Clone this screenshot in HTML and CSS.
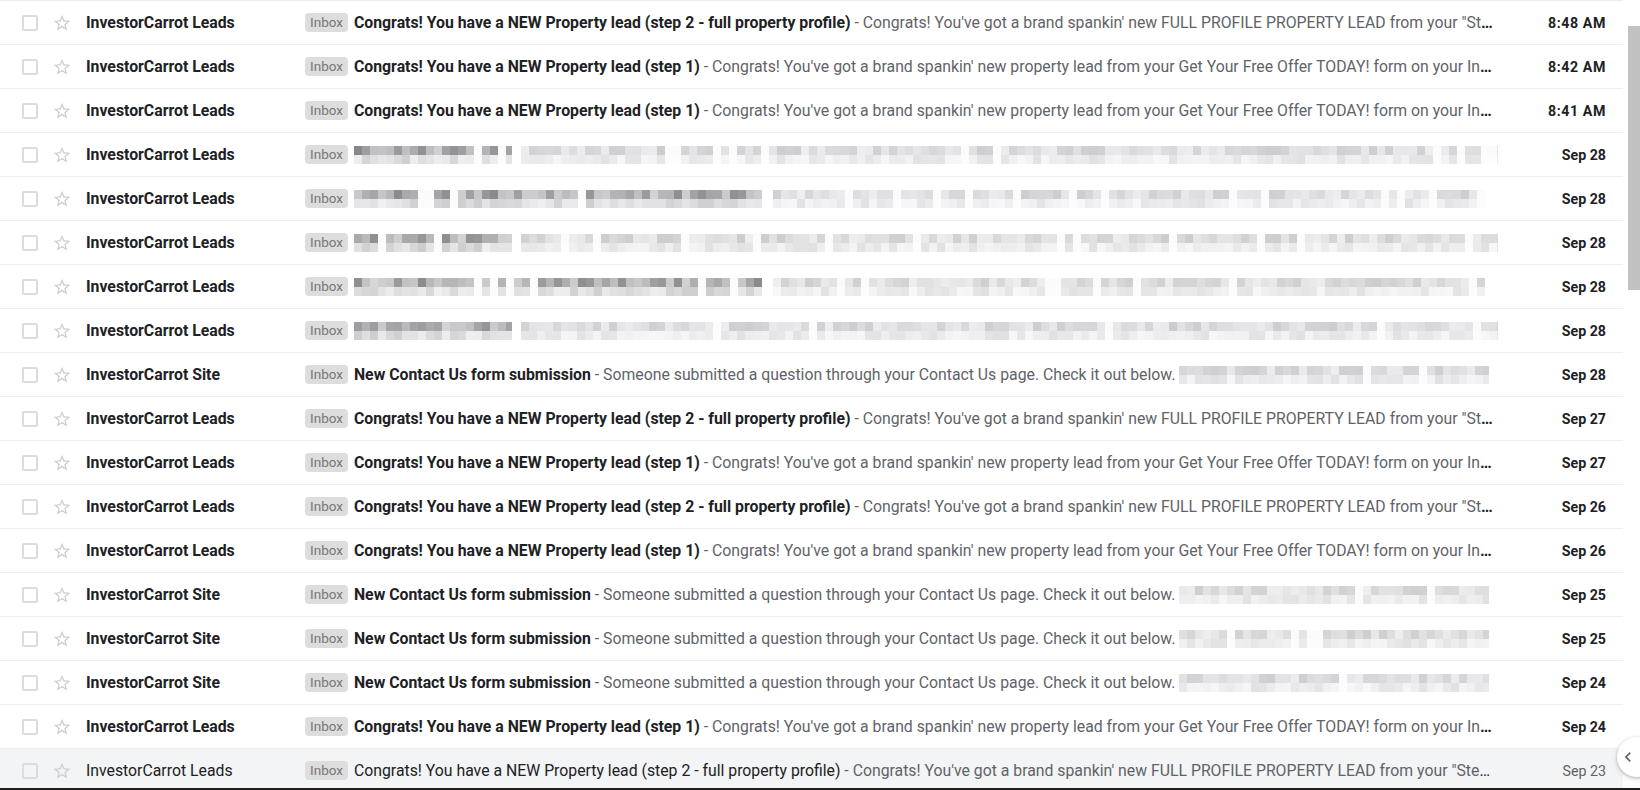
FILE: index.html
```html
<!DOCTYPE html>
<html lang="en">
<head>
    <meta charset="UTF-8">
    <title>Inbox</title>
    <link rel="stylesheet" href="styles.css">
</head>
<body>
    <div class="mail-list" id="mail-list"></div>
    <div class="scroll-track"><div class="scroll-thumb"></div></div>
    <button class="side-toggle" title="Show side panel">
        <svg width="20" height="20" viewBox="0 0 24 24"><path d="M15.41 7.41L14 6l-6 6 6 6 1.41-1.41L10.83 12z" fill="#5f6368"/></svg>
    </button>

    <script>
        const STEP2 = {
            subject: 'Congrats! You have a NEW Property lead (step 2 - full property profile)',
            snippet: 'Congrats! You\'ve got a brand spankin\' new FULL PROFILE PROPERTY LEAD from your "Step 2 - Full Property Profile" form on your InvestorCarrot website'
        };
        const STEP1 = {
            subject: 'Congrats! You have a NEW Property lead (step 1)',
            snippet: 'Congrats! You\'ve got a brand spankin\' new property lead from your Get Your Free Offer TODAY! form on your InvestorCarrot website'
        };
        const CONTACT = {
            subject: 'New Contact Us form submission',
            snippet: 'Someone submitted a question through your Contact Us page. Check it out below.',
            blur: 310
        };
        // hidden (pixelated) messages: widths of the subject / snippet blur
        const SHORT = { blurSubject: 158, blurSnippet: 980 };
        const LONG = { blurSubject: 410, blurSnippet: 712 };

        const LEADS = 'InvestorCarrot Leads';
        const SITE = 'InvestorCarrot Site';

        const rows = [
            [LEADS, STEP2, '8:48 AM'],
            [LEADS, STEP1, '8:42 AM'],
            [LEADS, STEP1, '8:41 AM'],
            [LEADS, SHORT, 'Sep 28'],
            [LEADS, LONG, 'Sep 28'],
            [LEADS, SHORT, 'Sep 28'],
            [LEADS, LONG, 'Sep 28'],
            [LEADS, SHORT, 'Sep 28'],
            [SITE, CONTACT, 'Sep 28'],
            [LEADS, STEP2, 'Sep 27'],
            [LEADS, STEP1, 'Sep 27'],
            [LEADS, STEP2, 'Sep 26'],
            [LEADS, STEP1, 'Sep 26'],
            [SITE, CONTACT, 'Sep 25'],
            [SITE, CONTACT, 'Sep 25'],
            [SITE, CONTACT, 'Sep 24'],
            [LEADS, STEP1, 'Sep 24'],
            [LEADS, STEP2, 'Sep 23', true]
        ];

        let seed = 7;
        function rnd() {
            seed = (seed * 16807) % 2147483647;
            return seed / 2147483647;
        }

        function grey(min, max) {
            const v = Math.round(min + rnd() * (max - min));
            return `rgb(${v},${v},${v + 2})`;
        }

        // builds a pixelated block standing in for blurred text
        function mosaic(width, dark) {
            const cols = Math.round(width / 8);
            let html = `<span class="mosaic" style="width:${width}px">`;
            for (let i = 0; i < cols; i++) {
                if (i > 2 && rnd() < 0.08) {
                    html += '<span class="px-col"><i style="background:#fbfbfb"></i><i style="background:#fcfcfc"></i></span>';
                    continue;
                }
                const top = dark ? grey(135, 215) : grey(205, 238);
                const bottom = dark ? grey(205, 240) : grey(225, 247);
                html += `<span class="px-col"><i style="background:${top}"></i><i style="background:${bottom}"></i></span>`;
            }
            return html + '</span>';
        }

        const star = '<svg width="20" height="20" viewBox="0 0 24 24"><path d="M22 9.24l-7.19-.62L12 2 9.19 8.63 2 9.24l5.46 4.73L5.82 21 12 17.27 18.18 21l-1.63-7.03L22 9.24zM12 15.4l-3.76 2.27 1-4.28-3.32-2.88 4.38-.38L12 6.1l1.71 4.04 4.38.38-3.32 2.88 1 4.28L12 15.4z" fill="#cfcfcf"/></svg>';

        const list = document.getElementById('mail-list');
        list.innerHTML = rows.map(([from, mail, date, read]) => {
            let body;
            if (mail.blurSubject) {
                body = mosaic(mail.blurSubject, true) + mosaic(mail.blurSnippet, false);
            } else {
                body = `<span class="subject">${mail.subject}</span>` +
                       `<span class="snippet"> - ${mail.snippet}${mail.blur ? ' ' + mosaic(mail.blur, false) : ''}</span>`;
            }
            const blurred = (mail.blurSubject || mail.blur) ? ' blurred' : '';
            const timeClass = date.includes('M') ? ' time' : '';
            return `
                <div class="mail-row${read ? ' read' : ''}">
                    <span class="check"></span>
                    <span class="star">${star}</span>
                    <span class="sender">${from}</span>
                    <div class="content${blurred}"><span class="label">Inbox</span>${body}</div>
                    <span class="date${timeClass}">${date}</span>
                </div>`;
        }).join('');
    </script>
</body>
</html>
```

FILE: styles.css
```css
* {
    box-sizing: border-box;
}
html, body {
    margin: 0;
}
body {
    font-family: Roboto, "Liberation Sans", sans-serif;
    color: #202124;
    background: #fff;
    display: flex;
    height: 790px;
    overflow: hidden;
    border-bottom: 2px solid #1f1f1f;
}
.mail-list {
    width: 1623px;
    flex: 0 0 1623px;
    border-top: 1px solid #ececec;
}
.mail-row {
    display: flex;
    align-items: center;
    height: 44px;
    padding-left: 22px;
    border-bottom: 1px solid #efefef;
    font-size: 15.8px;
    font-weight: 700;
}
.mail-row.read {
    background: #f3f4f5;
    font-weight: 400;
}
.check {
    width: 16px;
    height: 16px;
    border: 2px solid #dcdcdc;
    border-radius: 2px;
    flex: 0 0 16px;
}
.star {
    display: flex;
    margin-left: 14px;
    width: 20px;
}
.sender {
    margin-left: 14px;
    width: 219px;
    flex: 0 0 219px;
    white-space: nowrap;
    overflow: hidden;
}
.content {
    flex: 1;
    min-width: 0;
    padding-top: 1px;
    white-space: nowrap;
    overflow: hidden;
    text-overflow: ellipsis;
    line-height: 22px;
}
.content.blurred {
    text-overflow: clip;
}
.label {
    display: inline-block;
    vertical-align: 1px;
    background: #dddddd;
    color: #777;
    font-size: 13.5px;
    font-weight: 400;
    border-radius: 4px;
    padding: 2px 5px;
    margin-right: 6px;
    line-height: 15px;
}
.snippet {
    color: #5f6368;
    font-weight: 400;
}
.mosaic {
    display: inline-flex;
    vertical-align: middle;
    margin-top: -2px;
    margin-right: 9px;
    overflow: hidden;
}
.px-col {
    display: flex;
    flex-direction: column;
    flex: 0 0 8px;
}
.px-col i {
    height: 9px;
}
.date {
    width: 125px;
    flex: 0 0 125px;
    text-align: right;
    padding-right: 17px;
    padding-top: 1px;
    font-size: 14.2px;
}
.date.time {
    letter-spacing: 0.6px;
}
.read .date {
    color: #5f6368;
}
.scroll-track {
    flex: 0 0 17px;
    padding: 26px 0 0 5px;
}
.scroll-thumb {
    width: 12px;
    height: 264px;
    background: #c1c1c1;
}
.side-toggle {
    position: absolute;
    left: 1617px;
    top: 737px;
    width: 40px;
    height: 40px;
    border: none;
    border-radius: 50%;
    background: #fff;
    box-shadow: 0 1px 3px rgba(60, 64, 67, 0.3), 0 2px 6px rgba(60, 64, 67, 0.15);
    padding: 0 0 0 1px;
    display: flex;
    align-items: center;
    justify-content: flex-start;
}
```
